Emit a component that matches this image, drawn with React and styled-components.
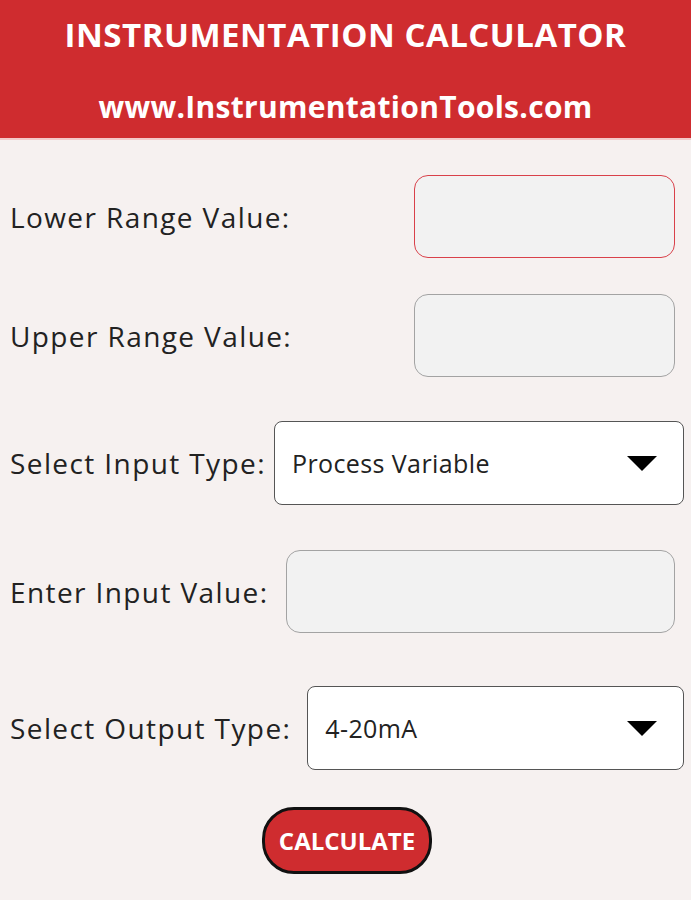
import styled, { createGlobalStyle } from "styled-components";

const GlobalStyle = createGlobalStyle`
  html, body {
    margin: 0;
    padding: 0;
    background: #f6f1f0;
    font-family: "Open Sans", "Noto Sans", sans-serif;
  }
`;

const Header = styled.div`
  background: #cf2c2f;
  height: 138px;
  border-bottom: 2px solid #f3c9c9;
  display: flex;
  flex-direction: column;
  align-items: center;
  color: #fff;
  font-weight: 700;
`;

const Title = styled.div`
  font-size: 33px;
  margin-top: 12px;
  letter-spacing: 0.5px;
`;

const Site = styled.div`
  font-size: 30px;
  margin-top: 29px;
  letter-spacing: 0.3px;
`;

const Form = styled.div`
  display: flex;
  flex-direction: column;
  padding: 0 7px 0 10px;
`;

const Row = styled.div`
  display: flex;
  align-items: center;
  margin-top: ${(p) => p.$top}px;
`;

const Label = styled.span`
  font-size: 28px;
  letter-spacing: 1.4px;
  color: #222;
  white-space: nowrap;
`;

const Field = styled.div`
  height: 83px;
  box-sizing: border-box;
  background: #f2f2f2;
  border: 1.5px solid ${(p) => (p.$focus ? "#d9414a" : "#a3a3a3")};
  border-radius: 14px;
  margin-left: ${(p) => (p.$width ? "auto" : `${p.$gap}px`)};
  margin-right: 9px;
  ${(p) => (p.$width ? `width: ${p.$width}px;` : "flex: 1;")}
`;

const Select = styled.div`
  flex: 1;
  height: 84px;
  box-sizing: border-box;
  margin-left: ${(p) => p.$gap}px;
  background: #fff;
  border: 1.5px solid #555;
  border-radius: 8px;
  display: flex;
  align-items: center;
  justify-content: space-between;
  padding: 0 26px 0 17px;
  font-size: 25px;
  letter-spacing: 0.4px;
  color: #222;
`;

const Arrow = styled.span`
  width: 0;
  height: 0;
  border-left: 15px solid transparent;
  border-right: 15px solid transparent;
  border-top: 15px solid #000;
`;

const ButtonRow = styled.div`
  display: flex;
  justify-content: center;
  margin-top: 37px;
`;

const Button = styled.button`
  background: #cf2c2f;
  color: #fff;
  font-family: "Open Sans", sans-serif;
  font-weight: 700;
  font-size: 24px;
  border: 3.5px solid #111;
  border-radius: 32px;
  width: 170px;
  height: 67px;
  padding: 0;
`;

export default function App() {
  return (
    <>
      <GlobalStyle />
      <Header>
        <Title>INSTRUMENTATION CALCULATOR</Title>
        <Site>www.InstrumentationTools.com</Site>
      </Header>
      <Form>
        <Row $top={35}>
          <Label>Lower Range Value:</Label>
          <Field $focus $width={261} />
        </Row>
        <Row $top={36}>
          <Label>Upper Range Value:</Label>
          <Field $width={261} />
        </Row>
        <Row $top={44}>
          <Label>Select Input Type:</Label>
          <Select $gap={8}>
            <span>Process Variable</span>
            <Arrow />
          </Select>
        </Row>
        <Row $top={45}>
          <Label>Enter Input Value:</Label>
          <Field $gap={18} />
        </Row>
        <Row $top={53}>
          <Label>Select Output Type:</Label>
          <Select $gap={16}>
            <span>4-20mA</span>
            <Arrow />
          </Select>
        </Row>
        <ButtonRow>
          <Button>CALCULATE</Button>
        </ButtonRow>
      </Form>
    </>
  );
}
